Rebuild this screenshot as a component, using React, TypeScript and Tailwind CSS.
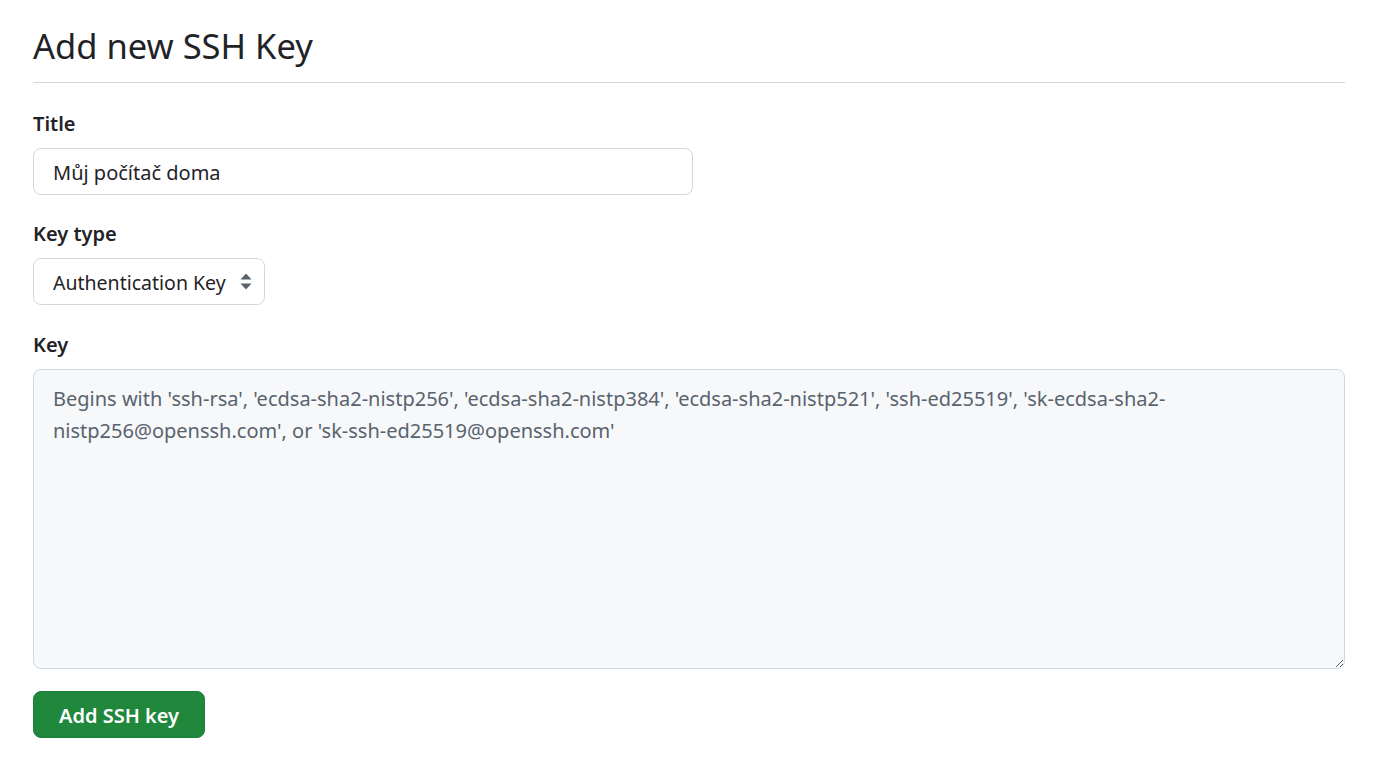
import React from "react";

export default function App() {
  const font = { fontFamily: '"Noto Sans", "Open Sans", sans-serif' };
  return (
    <div className="min-h-[777px] bg-white text-[#1f2328]" style={font}>
      <div className="px-[33px] pt-[24px] w-[1378px]">
        <div className="border-b border-[#d1d9e0] pb-[15px] w-[1312px]">
          <h2 className="text-[34.5px] leading-[43px] font-normal text-[#1f2328]">Add new SSH Key</h2>
        </div>
        <form className="w-[1312px]" onSubmit={(e) => e.preventDefault()}>
          <div className="mt-[26px]">
            <label className="block text-[20px] leading-[30px] font-semibold">Title</label>
            <input
              type="text"
              defaultValue="Můj počítač doma"
              className="mt-[9px] block w-[660px] h-[47px] rounded-[8px] border border-[#d1d9e0] bg-white px-[19px] pt-[2px] text-[20px] text-[#1f2328] outline-none"
              style={font}
            />
          </div>
          <div className="mt-[24px]">
            <label className="block text-[20px] leading-[30px] font-semibold">Key type</label>
            <div className="relative mt-[9px] w-[232px]">
              <select
                className="block w-[232px] h-[47px] appearance-none rounded-[8px] border border-[#d1d9e0] bg-white pl-[19px] pr-[26px] pt-[3px] text-[19.5px] text-[#1f2328] outline-none"
                style={font}
                defaultValue="auth"
              >
                <option value="auth">Authentication Key</option>
                <option value="sign">Signing Key</option>
              </select>
              <svg
                className="pointer-events-none absolute right-[13px] top-[15px]"
                width="12"
                height="17"
                viewBox="0 0 12 17"
              >
                <path d="M6 0.5 L11.5 6.5 H0.5 Z" fill="#59636e" />
                <path d="M6 16.5 L11.5 10.5 H0.5 Z" fill="#59636e" />
              </svg>
            </div>
          </div>
          <div className="mt-[25px]">
            <label className="block text-[20px] leading-[30px] font-semibold">Key</label>
            <textarea
              className="mt-[9px] block w-[1312px] h-[300px] rounded-[8px] border border-[#d1d9e0] bg-[#f6f8fa] px-[19px] pt-[13px] text-[20px] leading-[32px] text-[#1f2328] placeholder:text-[#59636e] outline-none"
              style={font}
              placeholder={"Begins with 'ssh-rsa', 'ecdsa-sha2-nistp256', 'ecdsa-sha2-nistp384', 'ecdsa-sha2-nistp521', 'ssh-ed25519', 'sk-ecdsa-sha2-\nnistp256@openssh.com', or 'sk-ssh-ed25519@openssh.com'"}
            />
          </div>
          <button
            type="submit"
            className="mt-[22px] h-[47px] w-[172px] rounded-[8px] bg-[#1f883d] border border-[#1a7f37] pt-[3px] text-white text-[20px] font-semibold"
            style={font}
          >
            Add SSH key
          </button>
        </form>
      </div>
    </div>
  );
}
